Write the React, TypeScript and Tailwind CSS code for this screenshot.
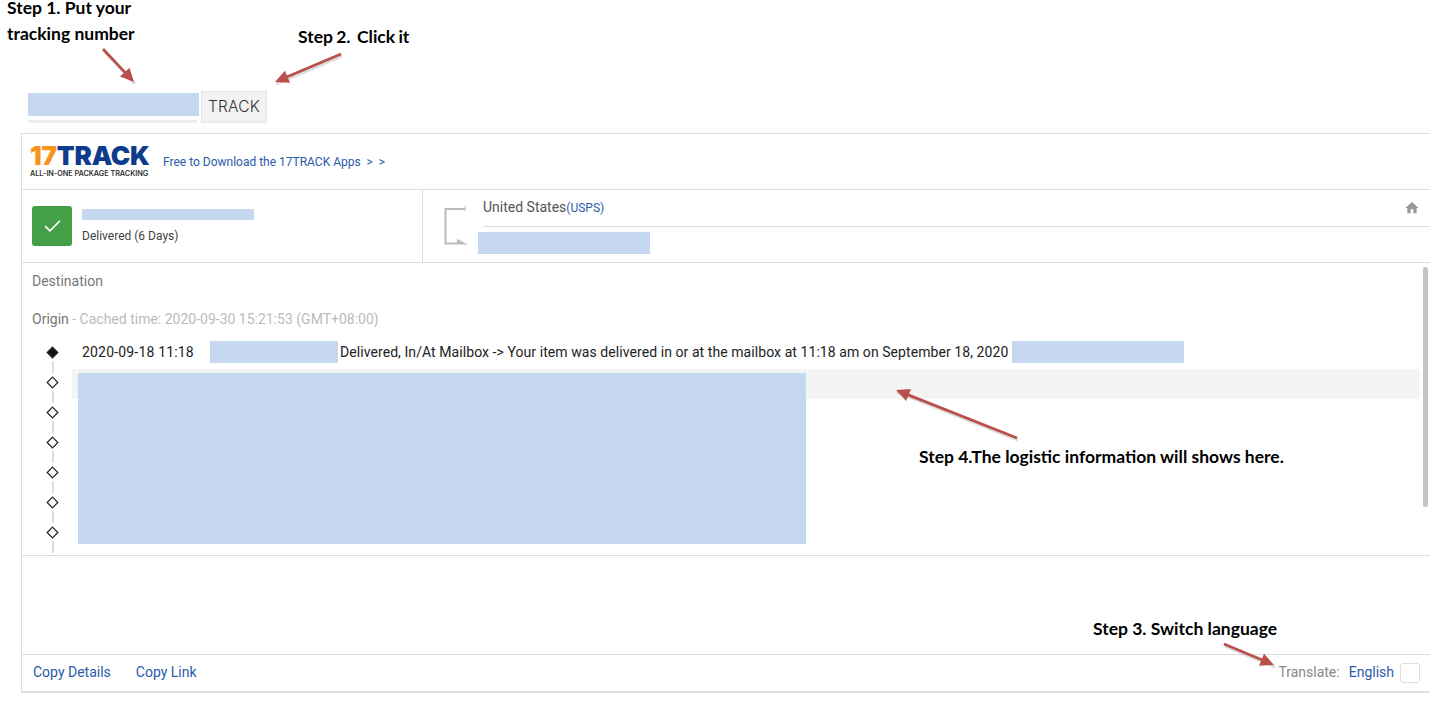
import { Check } from "lucide-react";

const sans = "font-['Roboto',sans-serif]";
const note = "absolute font-['Lato',sans-serif] font-bold text-[17.5px] leading-[26px] text-black whitespace-pre";
const hide = "absolute bg-[#c6d8f0]";

// the red hand-drawn arrows of the annotations
function Arrow({ x1, y1, x2, y2 }: { x1: number; y1: number; x2: number; y2: number }) {
  const a = Math.atan2(y2 - y1, x2 - x1);
  const head = (d: number) => `${x2 - 15 * Math.cos(a + d)},${y2 - 15 * Math.sin(a + d)}`;
  return (
    <g>
      <line x1={x1 + 1} y1={y1 + 2} x2={x2 + 1} y2={y2 + 2} stroke="#00000022" strokeWidth="3" />
      <line x1={x1} y1={y1} x2={x2 - 5 * Math.cos(a)} y2={y2 - 5 * Math.sin(a)} stroke="#b9504c" strokeWidth="2.8" />
      <polygon points={`${x2},${y2} ${head(0.45)} ${head(-0.45)}`} fill="#b9504c" />
    </g>
  );
}

function Diamond({ filled }: { filled?: boolean }) {
  return (
    <svg width="13" height="13" viewBox="0 0 13 13" className="shrink-0">
      <path d="M6.500 1.200 11.800 6.500 6.500 11.800 1.200 6.500Z" fill={filled ? "#111" : "#fff"} stroke="#222" strokeWidth="1.2" />
    </svg>
  );
}

function TimelineRow({ first, highlight, children }: { first?: boolean; highlight?: boolean; children?: React.ReactNode }) {
  return (
    <div className="flex h-[30px]">
      <div className="relative flex w-[50px] shrink-0 items-center pl-[24px]">
        <Diamond filled={first} />
        <div className="absolute left-[30px] top-[24px] h-[12px] w-[2px] bg-[#dddddd]" />
      </div>
      {highlight ? (
        <div className="mt-[2px] h-[30px] flex-1 bg-[#f4f4f4]" />
      ) : (
        <div className="flex h-[30px] flex-1 items-center pl-[10px] text-[14px] text-[#222]">{children}</div>
      )}
    </div>
  );
}

export default function App() {
  return (
    <div className={`relative h-[707px] w-[1443px] overflow-hidden bg-white ${sans}`}>
      <div className="flex h-[133px] items-end gap-[4px] pb-[10px] pl-[28px]">
        <div className="h-[30px] w-[169px] border-b-[3px] border-[#eeeeee]" />
        <button className="flex h-[32px] w-[66px] items-center justify-center border border-[#e6e6e6] bg-[#f2f2f2] font-['Inter',sans-serif] text-[15.5px] font-light tracking-[0.2px] text-[#333]">
          TRACK
        </button>
      </div>

      <div className="ml-[21px] flex h-[560px] w-[1409px] flex-col border-b-2 border-l border-t border-[#dddddd] border-b-[#e0e0e0]">
        <div className="flex h-[56px] shrink-0 items-center border-b border-[#dddddd] pl-[8px]">
          <div className="flex w-[120px] flex-col font-['Inter',sans-serif]">
            <div className="text-[26px] font-black leading-[22px] tracking-[-0.2px]">
              <span className="text-[#f7941d]">17</span>
              <span className="text-[#0d3c8c]">TRACK</span>
            </div>
            <div className="mt-[2px] whitespace-nowrap text-[7.3px] font-semibold leading-[9px] tracking-[-0.05px] text-[#333]">
              ALL-IN-ONE PACKAGE TRACKING
            </div>
          </div>
          <a className="ml-[13px] text-[12px] text-[#2a5caa]">Free to Download the 17TRACK Apps &nbsp;&gt; &nbsp;&gt;</a>
        </div>

        <div className="flex h-[73px] shrink-0 border-b border-[#dddddd]">
          <div className="flex w-[401px] shrink-0 items-center border-r border-[#dddddd] pl-[10px]">
            <div className="flex h-[40px] w-[40px] items-center justify-center rounded-[3px] bg-[#43a047]">
              <Check size={21} strokeWidth={2} color="#fff" />
            </div>
            <div className="ml-[10px] mt-[20px] text-[12px] text-[#444]">Delivered (6 Days)</div>
          </div>
          <div className="flex flex-1 pl-[21px]">
            <svg width="24" height="40" viewBox="0 0 24 40" className="mt-[16px] shrink-0" fill="none">
              <path d="M21 3H1.500V37.500H13" stroke="#bbbbbb" strokeWidth="2" />
              <path d="M21 0v5" stroke="#bbbbbb" />
              <path d="M13 33 24 38.500H13Z" fill="#bbbbbb" />
            </svg>
            <div className="ml-[15px] flex-1">
              <div className="flex h-[37px] items-center justify-between border-b border-[#dddddd] pr-[10px]">
                <span className="mb-[2px] text-[14px] text-[#555]">
                  United States<span className="text-[12px] text-[#2a5caa]">(USPS)</span>
                </span>
                <svg width="16" height="16" viewBox="0 0 24 24" fill="#999999" className="mb-[1px]">
                  <path d="M10 20v-6h4v6h5v-8h3L12 3 2 12h3v8z" />
                </svg>
              </div>
            </div>
          </div>
        </div>

        <div className="relative h-[293px] shrink-0 border-b border-[#dddddd]">
          <div className="pl-[10px] pt-[8px] text-[14px] leading-[20px] text-[#777]">Destination</div>
          <div className="mt-[18px] pl-[10px] text-[14px] leading-[20px] text-[#777]">
            Origin <span className="text-[#bbbbbb]">- Cached time: 2020-09-30 15:21:53 (GMT+08:00)</span>
          </div>
          <div className="mt-[8px] pr-[10px]">
            <TimelineRow first>
              <span className="w-[128px] shrink-0 tracking-[0.18px]">2020-09-18 11:18</span>
              <span className="w-[130px] shrink-0" />
              <span className="whitespace-nowrap tracking-[0.07px]">
                Delivered, In/At Mailbox -&gt; Your item was delivered in or at the mailbox at 11:18 am on September 18, 2020
              </span>
            </TimelineRow>
            <TimelineRow highlight />
            <TimelineRow />
            <TimelineRow />
            <TimelineRow />
            <TimelineRow />
            <TimelineRow />
          </div>
          {/* scrollbar */}
          <div className="absolute left-[1401px] top-[4px] h-[240px] w-[5px] rounded-[3px] bg-[#c4c4c4]" />
        </div>

        <div className="flex-1" />

        <div className="flex h-[37px] shrink-0 items-center border-t border-[#dddddd] pb-[2px] pl-[11px] pr-[10px] text-[14px]">
          <a className="text-[#2a5caa]">Copy Details</a>
          <a className="ml-[25px] text-[#2a5caa]">Copy Link</a>
          <span className="ml-auto text-[#888]">Translate:</span>
          <a className="ml-[9px] text-[#2a5caa]">English</a>
          <div className="ml-[6px] mt-[2px] h-[20px] w-[20px] rounded-[3px] border border-[#dddddd]" />
        </div>
      </div>

      {/* blue redaction blocks over the page */}
      <div className={`${hide} left-[28px] top-[93px] h-[23px] w-[171px]`} />
      <div className={`${hide} left-[82px] top-[209px] h-[11px] w-[172px]`} />
      <div className={`${hide} left-[478px] top-[232px] h-[22px] w-[172px]`} />
      <div className={`${hide} left-[210px] top-[341px] h-[22px] w-[128px]`} />
      <div className={`${hide} left-[1012px] top-[341px] h-[22px] w-[172px]`} />
      <div className={`${hide} left-[78px] top-[373px] h-[171px] w-[728px]`} />

      {/* annotations */}
      <div className={`${note} left-[7px] top-0 !leading-[16px]`}>
        <div>Step 1. Put your</div>
        <div className="mt-[10px]">tracking number</div>
      </div>
      <div className={`${note} left-[298px] top-[24px] [word-spacing:-1px]`}>Step 2.  Click it</div>
      <div className={`${note} left-[919px] top-[444px]`}>Step 4.The logistic information will shows here.</div>
      <div className={`${note} left-[1093px] top-[616px]`}>Step 3. Switch language</div>
      <svg className="pointer-events-none absolute left-0 top-0" width="1443" height="707">
        <Arrow x1={103} y1={49} x2={134} y2={82} />
        <Arrow x1={341} y1={54} x2={275} y2={82} />
        <Arrow x1={1017} y1={438} x2={896} y2={390} />
        <Arrow x1={1224} y1={644} x2={1274} y2={665} />
      </svg>
    </div>
  );
}
